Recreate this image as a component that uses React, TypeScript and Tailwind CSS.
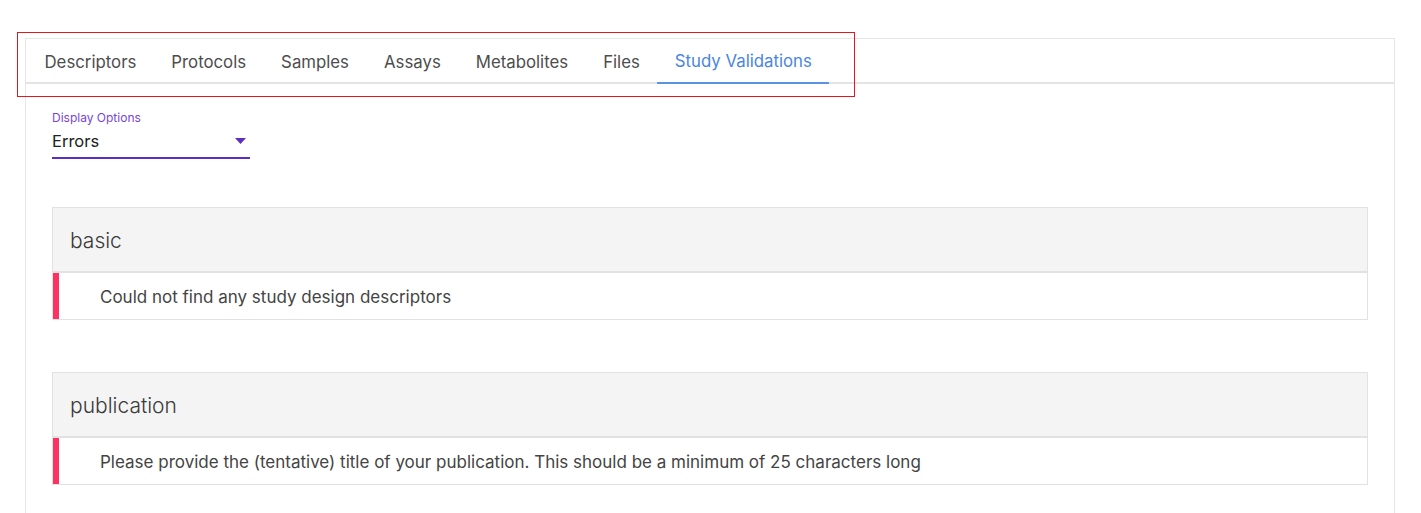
const TABS = [
  "Descriptors",
  "Protocols",
  "Samples",
  "Assays",
  "Metabolites",
  "Files",
  "Study Validations",
];

const SECTIONS = [
  { title: "basic", errors: ["Could not find any study design descriptors"] },
  {
    title: "publication",
    errors: [
      "Please provide the (tentative) title of your publication. This should be a minimum of 25 characters long",
    ],
  },
];

function ValidationSection({ title, errors }: { title: string; errors: string[] }) {
  return (
    <div className="border border-[#e2e2e2]">
      <div className="flex h-[65px] items-center border-b-2 border-[#e2e2e2] bg-[#f4f4f4] pl-[17px] pt-[2px] text-[21px] font-light text-[#3a3a3a]">
        {title}
      </div>
      {errors.map((e, i) => (
        <div key={i} className="flex h-[46px] items-center border-l-[6px] border-[#fb3262] pl-[41px] pt-[3px] text-[17px] text-[#444]">
          {e}
        </div>
      ))}
    </div>
  );
}

export default function App() {
  const active = "Study Validations";
  return (
    <div
      className="relative h-[513px] w-[1421px] overflow-hidden bg-white pl-[25px] pt-[38px]"
      style={{ fontFamily: "Inter, 'Noto Sans', sans-serif" }}
    >
      <div className="h-[600px] w-[1370px] border border-[#e6e6e6]">
        <div className="flex h-[45px] border-b-2 border-[#e4e4e4] pl-[1px]">
          {TABS.map((t) => (
            <div
              key={t}
              className={
                "-mb-[2px] flex items-center px-[17.5px] pt-[2px] text-[16.8px] " +
                (t === active
                  ? "border-b-2 border-[#5a93e6] text-[#4a86e0]"
                  : "text-[#4d4d4d]")
              }
            >
              {t}
            </div>
          ))}
        </div>

        <div className="px-[26px] pt-[27px]">
          <div className="text-[12px] leading-[14px] text-[#7a45d6]">Display Options</div>
          <div className="mt-[3px] flex h-[31px] w-[198px] items-center justify-between border-b-2 border-[#5c2fc2] pb-[2px] pr-[4px]">
            <span className="text-[16.5px] text-[#222]">Errors</span>
            <svg width="11" height="6" viewBox="0 0 11 6" className="mb-[2px]">
              <path d="M0 0h11L5.5 6z" fill="#5c2fc2" />
            </svg>
          </div>

          <div className="mt-[48px] flex flex-col gap-[52px]">
            {SECTIONS.map((s) => (
              <ValidationSection key={s.title} title={s.title} errors={s.errors} />
            ))}
          </div>
        </div>
      </div>

      <div className="pointer-events-none absolute left-[17px] top-[32px] h-[65px] w-[838px] border border-[#e8141e]" />
    </div>
  );
}
